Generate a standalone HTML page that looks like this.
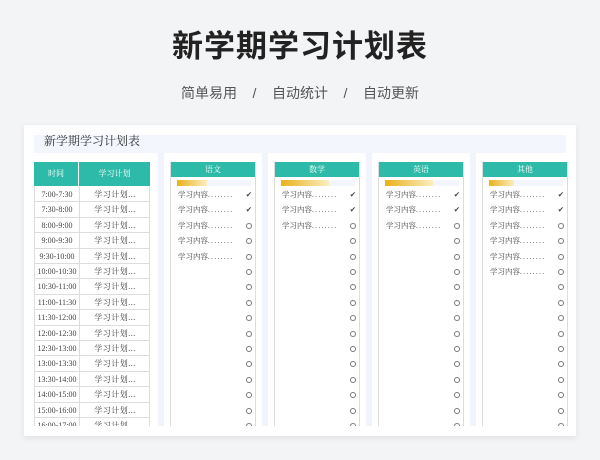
<!DOCTYPE html>
<html><head><meta charset="utf-8"><style>
*{margin:0;padding:0;box-sizing:border-box}
body{width:600px;height:460px;background:#f3f4f6;font-family:"Liberation Serif","Noto Serif CJK SC",serif;position:relative;overflow:hidden}
.t{position:absolute;left:0;width:600px;text-align:center;top:21px;font:bold 31px "Liberation Sans","Noto Sans CJK SC",sans-serif;color:#222;letter-spacing:1px}
.s{position:absolute;left:0;width:600px;text-align:center;top:83px;font:14px "Liberation Sans","Noto Sans CJK SC",sans-serif;color:#555}
.card{position:absolute;left:24px;top:125px;width:552px;height:311px;background:#fff;box-shadow:0 2px 6px rgba(0,0,0,.08);overflow:hidden}
.hd{position:absolute;left:10px;top:10px;width:532px;height:18px;background:#f3f6fd;font-size:12px;color:#333;padding-left:10px;line-height:12px}
.clip{position:absolute;left:0;top:28px;width:552px;height:273px;overflow:hidden}
.gap{position:absolute;top:0;width:6px;height:273px;background:#f1f4fc}
.th{position:absolute;top:9px;height:24px;background:#2dbaa8;color:#fff;font-size:8px;text-align:center;line-height:24px}
.row{position:absolute;left:10px;width:116px;height:15.4px;border-bottom:1px solid #ddd;font-size:8px;color:#444;line-height:15px}
.row span{position:absolute;text-align:center}
.pn{position:absolute;top:9px;width:86px;height:300px;border-left:1px solid #ddd;border-right:1px solid #ddd}
.ph{height:15px;background:#2dbaa8;color:#fff;font-size:8px;text-align:center;line-height:15px}
.bar{position:absolute;left:6px;top:18px;width:74px;height:6px;background:#f3f6fd}
.bar i{display:block;height:6px;background:linear-gradient(90deg,#e8b21a,#fbeec0)}
.it{position:absolute;left:7px;width:74px;font-size:7.5px;color:#444;height:12px;line-height:12px;white-space:nowrap}
.it em{font-style:normal;letter-spacing:1.3px}
.it b{position:absolute;right:0;top:0;font-weight:normal}
.c{display:inline-block;width:6px;height:6px;border:1px solid #777;border-radius:50%;margin-top:3px}
</style></head><body>
<div class="t">新学期学习计划表</div>
<div class="s">简单易用 &nbsp;&nbsp;&nbsp;/&nbsp;&nbsp;&nbsp; 自动统计 &nbsp;&nbsp;&nbsp;/&nbsp;&nbsp;&nbsp; 自动更新</div>
<div class="card">
<div class="hd">新学期学习计划表</div>
<div class="clip">
<div class="gap" style="left:134px"></div><div class="gap" style="left:238px"></div><div class="gap" style="left:342px"></div><div class="gap" style="left:446px"></div>
<div class="th" style="left:10px;width:45px;border-right:1px solid #fff">时间</div>
<div class="th" style="left:55px;width:71px">学习计划</div>
<div id="rows"></div>
<div id="pns"></div>
</div></div>
<script>
var t=["7:00-7:30","7:30-8:00","8:00-9:00","9:00-9:30","9:30-10:00","10:00-10:30","10:30-11:00","11:00-11:30","11:30-12:00","12:00-12:30","12:30-13:00","13:00-13:30","13:30-14:00","14:00-15:00","15:00-16:00","16:00-17:00"];
var h="";t.forEach(function(x,i){h+='<div class="row" style="top:'+(34+i*15.4)+'px;border-left:1px solid #ddd;border-right:1px solid #ddd"><span style="left:0;width:45px;border-right:1px solid #ddd;height:15px">'+x+'</span><span style="left:45px;width:70px;letter-spacing:0.5px">学习计划...</span></div>'});
document.getElementById("rows").innerHTML=h;
var P=[["语文",5,30],["数学",3,48],["英语",3,48],["其他",6,25]];h="";
P.forEach(function(p,k){var s='<div class="pn" style="left:'+(146+k*104)+'px"><div class="ph">'+p[0]+'</div><div class="bar"><i style="width:'+p[2]+'px"></i></div>';
for(var i=0;i<16;i++){s+='<div class="it" style="top:'+(27+i*15.4)+'px">'+(i<p[1]?'学习内容<em>........</em>':'')+'<b>'+(i<2?'✔':'<span class="c"></span>')+'</b></div>'}
h+=s+'</div>'});
document.getElementById("pns").innerHTML=h;
</script>
</body></html>
